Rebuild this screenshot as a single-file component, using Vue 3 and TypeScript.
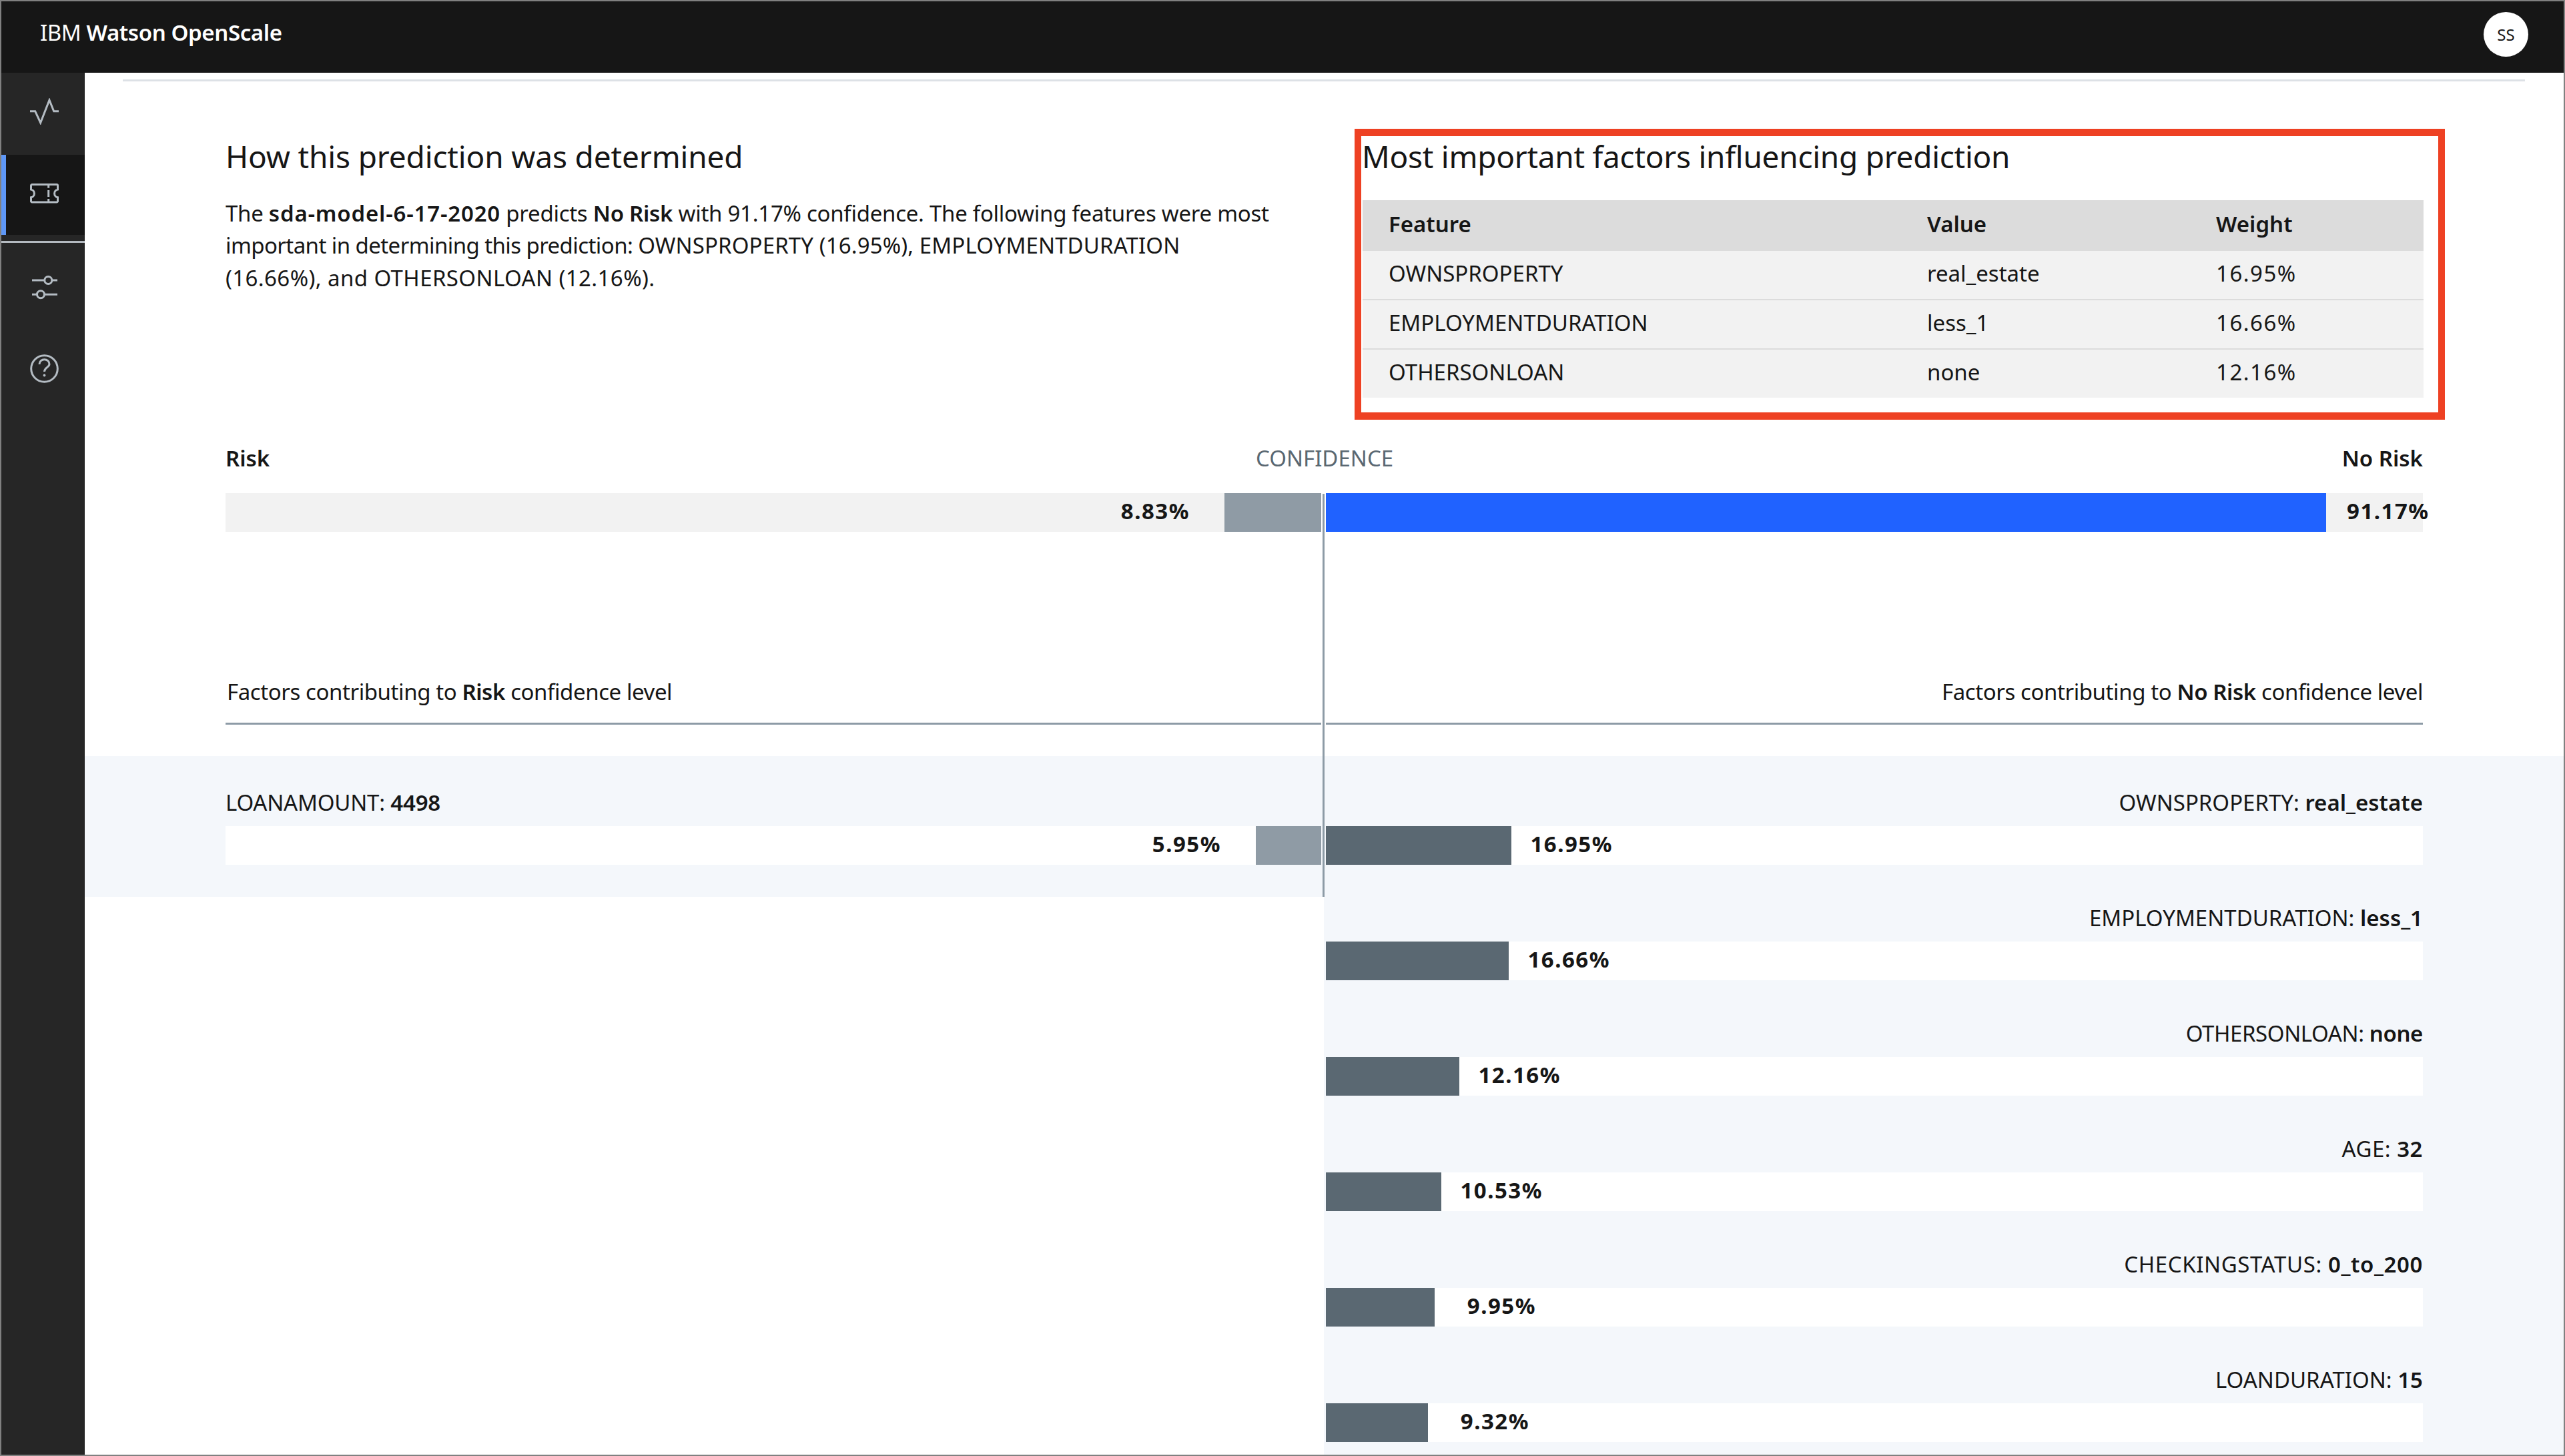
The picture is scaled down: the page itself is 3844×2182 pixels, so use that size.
<script setup lang="ts">
interface Factor { name: string; value: string; pct: string; width: number; spacing: number }
const factors: Factor[] = [
  { name: 'OWNSPROPERTY', value: 'real_estate', pct: '16.95%', width: 278, spacing: 0 },
  { name: 'EMPLOYMENTDURATION', value: 'less_1', pct: '16.66%', width: 274, spacing: 0 },
  { name: 'OTHERSONLOAN', value: 'none', pct: '12.16%', width: 200, spacing: -0.4 },
  { name: 'AGE', value: '32', pct: '10.53%', width: 173, spacing: 0.5 },
  { name: 'CHECKINGSTATUS', value: '0_to_200', pct: '9.95%', width: 163, spacing: 0.6 },
  { name: 'LOANDURATION', value: '15', pct: '9.32%', width: 153, spacing: 0 },
]
const rows = [
  ['OWNSPROPERTY', 'real_estate', '16.95%'],
  ['EMPLOYMENTDURATION', 'less_1', '16.66%'],
  ['OTHERSONLOAN', 'none', '12.16%'],
]
</script>

<template>
  <div class="window">
    <header class="topbar">
      <div class="brand">IBM <b>Watson OpenScale</b></div>
      <div class="avatar">SS</div>
    </header>
    <div class="body">
      <nav class="rail">
        <div class="nav nav1">
          <svg width="44" height="40" viewBox="0 0 44 40" fill="none" stroke="#b4bcc3" stroke-width="3"><path d="M0 19.700H7.700L15.700 37L29 3L35.700 19.700H43" /></svg>
        </div>
        <div class="nav nav2">
          <svg width="44" height="30" viewBox="0 0 44 30" fill="none" stroke="#b4bcc3" stroke-width="3"><path d="M1.500 3A1.500 1.500 0 0 1 3 1.500H40A1.500 1.500 0 0 1 41.500 3V9A6 6 0 0 0 41.500 20.800V26.500A1.500 1.500 0 0 1 40 28H3A1.500 1.500 0 0 1 1.500 26.500V20.800A6 6 0 0 0 1.500 9Z" /><path d="M27.700 1.500V6.700M27.700 10V20M27.700 23V28" /></svg>
        </div>
        <div class="rule"></div>
        <div class="nav nav3">
          <svg width="38" height="36" viewBox="0 0 38 36" fill="none" stroke="#b4bcc3" stroke-width="3"><path d="M0 7H18.500M30 7H38M0 28.300H7.500M18.500 28.300H38" /><circle cx="24.300" cy="7" r="5.500" /><circle cx="13" cy="28.300" r="5.500" /></svg>
        </div>
        <div class="nav nav4">
          <svg width="43" height="43" viewBox="0 0 43 43" fill="none" stroke="#b4bcc3" stroke-width="3"><circle cx="21.500" cy="21.500" r="19.800" /><path d="M14 15C14 10.500 17.500 7.700 21.500 7.700C25.500 7.700 29 10.500 29 14.800C29 19.500 21.500 19.500 21.500 26" /><circle cx="21.500" cy="31.500" r="1.900" fill="#b4bcc3" stroke="none" /></svg>
        </div>
      </nav>
      <main class="main">
        <div class="toprule"></div>
        <section class="intro">
          <div class="intro-left">
            <h2>How this prediction was determined</h2>
            <p>
              <span class="l1">The <b class="model">sda-model-6-17-2020</b> predicts <b>No Risk</b> with 91.17% confidence. The following features were most</span><br />
              <span class="l2a">important in determining this prediction: </span><span class="l2b">OWNSPROPERTY (16.95%), EMPLOYMENTDURATION</span><br />
              <span class="l3">(16.66%), and OTHERSONLOAN (12.16%).</span>
            </p>
          </div>
          <div class="intro-right">
            <h2 class="h-right">Most important factors influencing prediction</h2>
            <div class="table">
              <div class="tr th"><span>Feature</span><span>Value</span><span>Weight</span></div>
              <div v-for="r in rows" :key="r[0]" class="tr"><span>{{ r[0] }}</span><span>{{ r[1] }}</span><span class="num">{{ r[2] }}</span></div>
            </div>
            <div class="callout"></div>
          </div>
        </section>

        <section class="conf">
          <div class="conf-labels"><b>Risk</b><span class="conf-mid">CONFIDENCE</span><b>No Risk</b></div>
          <div class="split conf-bars">
            <div class="half left trk">
              <span class="pct">8.83%</span>
              <div class="fill gray" style="width: 145px"></div>
            </div>
            <div class="half right trk">
              <div class="fill blue" style="width: 1499px"></div>
              <span class="pct over">91.17%</span>
            </div>
          </div>
        </section>

        <div class="factors-head split">
          <div class="half left head-cell">Factors contributing to&nbsp;<b>Risk</b>&nbsp;confidence level</div>
          <div class="half right head-cell head-end">Factors contributing to&nbsp;<b>No Risk</b>&nbsp;confidence level</div>
        </div>

        <section class="factors">
          <div class="axis"></div>
          <div class="rightband"></div>
          <div class="leftband"></div>
          <div v-for="(f, i) in factors" :key="f.name" class="frow">
            <div class="labels">
              <div class="lab"><template v-if="i === 0"><span class="loan">LOANAMOUNT: <b>4498</b></span></template></div>
              <div class="lab" :style="{ letterSpacing: f.spacing + 'px' }">{{ f.name }}: <b>{{ f.value }}</b></div>
            </div>
            <div class="split">
              <div class="half left" :class="{ white: i === 0 }">
                <template v-if="i === 0">
                  <span class="pct">5.95%</span>
                  <div class="fill gray" style="width: 98px"></div>
                </template>
              </div>
              <div class="half right white">
                <div class="fill slate" :style="{ width: f.width + 'px' }"></div>
                <span class="pct fixed">{{ f.pct }}</span>
              </div>
            </div>
          </div>
        </section>
      </main>
    </div>
  </div>
</template>

<style>
html, body { margin: 0; padding: 0; background: #fff; }
</style>

<style scoped>
.window {
  width: 3844px; height: 2182px; box-sizing: border-box;
  border: 2px solid #808080; display: flex; flex-direction: column; overflow: hidden;
  font-family: "Noto Sans", "Liberation Sans", sans-serif; color: #161616; background: #fff;
}
b { font-weight: 600; }
.topbar {
  height: 107px; flex: none; background: #161616; color: #fff;
  display: flex; align-items: center; justify-content: space-between;
  padding: 0 53px 8px 58px; box-sizing: border-box;
}
.brand { font-size: 33px; letter-spacing: -0.4px; margin-bottom: 6px; }
.avatar {
  width: 67px; height: 67px; border-radius: 50%; background: #fff; color: #161616;
  display: flex; align-items: center; justify-content: center; font-size: 24px;
}
.body { flex: 1; display: flex; min-height: 0; }
.rail { width: 125px; flex: none; background: #262626; display: flex; flex-direction: column; }
.nav { display: flex; justify-content: center; align-items: center; box-sizing: border-box; }
.nav svg { display: block; }
.nav1 { height: 123px; padding: 0 0 8px 4px; }
.nav2 { height: 120px; padding: 0 0 4px 4px; background: #161616; box-shadow: inset 7px 0 0 #5e97f6; }
.rule { height: 3px; margin-top: 9px; background: #b4bac0; }
.nav3 { height: 134px; padding: 0 0 0 4px; }
.nav4 { height: 109px; padding: 0 0 0 4px; }

.main { flex: 1; position: relative; min-width: 0; overflow: hidden; }
.toprule { height: 3px; margin: 10px 58px 0 57px; background: #dde1e6; }

.intro { display: flex; padding-left: 211px; height: 534px; }
.intro-left { width: 1704px; flex: none; }
h2 { font-weight: 400; font-size: 46px; line-height: 60px; margin: 0; padding-top: 82px; white-space: nowrap; letter-spacing: -0.15px; }
.intro-left p { margin: 32px 0 0; font-size: 33px; line-height: 48.300px; white-space: nowrap; }
.l1 { letter-spacing: -0.27px; }
.model { letter-spacing: 0.8px; }
.l2a { letter-spacing: -0.58px; }
.l2b { letter-spacing: 0.11px; }
.l3 { letter-spacing: 0.4px; }
.intro-right { width: 1590px; position: relative; }
.h-right { letter-spacing: -0.27px; margin-left: -1px; }
.table { margin-top: 36px; font-size: 33px; }
.tr {
  display: grid; grid-template-columns: 807px 433px 1fr; padding: 0 0 6px 39px; height: 74px; align-items: center;
  background: #f2f2f2; border-top: 2px solid #dcdcdc; box-sizing: border-box;
}
.tr.th { background: #dcdcdc; font-weight: 600; height: 76px; border-top: 0; }
.tr:nth-child(2) { border-top: 0; height: 72px; }
.num { letter-spacing: 1.5px; }
.callout {
  position: absolute; left: -12px; top: 71px; width: 1634px; height: 436px;
  box-sizing: border-box; border: solid #ee4123; border-width: 11px 10px; pointer-events: none;
}

.conf { padding: 0 211px 0 211px; }
.conf-labels { display: flex; justify-content: space-between; align-items: center; font-size: 33px; height: 60px; }
.conf-mid { position: absolute; left: 1755px; width: 205px; text-align: center; color: #5a6872; white-space: nowrap; }
.conf-bars { margin-top: 23px; height: 57px; }

.split { display: flex; gap: 7px; height: 58px; }
.half { display: flex; align-items: center; position: relative; }
.half.left { width: 1642px; flex: none; justify-content: flex-end; }
.half.right { flex: 1; min-width: 0; }
.trk { background: #f2f2f2; }
.white { background: #fff; }
.fill { height: 100%; flex: none; }
.gray { background: #8f9ba5; }
.blue { background: #2062ff; }
.slate { background: #5a6872; }
.pct { font-size: 33px; font-weight: 700; white-space: nowrap; letter-spacing: 1.5px; padding-bottom: 5px; flex: none; }
.half.left .pct { margin-right: 52px; }
.over { margin-left: 31px; }
.fixed { width: 128px; margin-left: 24px; text-align: right; }

.factors-head {
  height: auto; margin: 0 211px; padding-top: 216px;
  font-size: 33px; line-height: 48px; position: relative; z-index: 1;
}
.head-cell {
  display: block; padding-bottom: 22px; border-bottom: 3px solid #8d9ba6; white-space: nowrap; letter-spacing: -0.42px;
}
.half.left.head-cell { text-align: left; padding-left: 2px; box-sizing: border-box; }
.head-end { text-align: right; }
.factors { position: relative; margin-top: 47px; padding: 0 211px; }
.leftband { position: absolute; left: 0; top: 0; width: 1858px; height: 211px; background: #f4f7fb; }
.rightband { position: absolute; left: 1857px; right: 0; top: 0; height: 1100px; background: #f4f7fb; }
.axis { position: absolute; left: 1855px; top: -393px; height: 604px; width: 3px; background: #8d9ba6; z-index: 2; }
.frow { position: relative; z-index: 1; height: 173px; padding-top: 46px; box-sizing: border-box; }
.labels { display: flex; justify-content: space-between; font-size: 33px; line-height: 48px; height: 59px; }
.lab { white-space: nowrap; }
.loan { letter-spacing: -0.2px; }
</style>
